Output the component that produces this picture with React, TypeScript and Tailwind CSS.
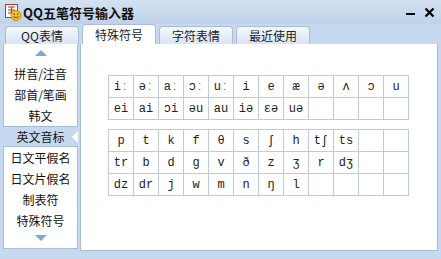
import React from "react";

const row1a = ["iː", "əː", "aː", "ɔː", "uː", "i", "e", "æ", "ə", "ʌ", "ɔ", "u"];
const row1b = ["ei", "ai", "ɔi", "əu", "au", "iə", "ɛə", "uə", "", "", "", ""];
const row2a = ["p", "t", "k", "f", "θ", "s", "ʃ", "h", "tʃ", "ts", "", ""];
const row2b = ["tr", "b", "d", "g", "v", "ð", "z", "ʒ", "r", "dʒ", "", ""];
const row2c = ["dz", "dr", "j", "w", "m", "n", "ŋ", "l", "", "", "", ""];

const cjk = { fontFamily: '"Noto Sans CJK SC", "Noto Sans", sans-serif' };
const mono = { fontFamily: '"Liberation Mono", "DejaVu Sans Mono", monospace' };

function Table({ rows }: { rows: string[][] }) {
  return (
    <div className="border-t border-l border-[#bccbdd] w-[301px]">
      {rows.map((r, i) => (
        <div key={i} className="flex">
          {r.map((c, j) => (
            <div
              key={j}
              className="w-[25px] h-[22px] border-r border-b border-[#bccbdd] flex items-center justify-center text-[12px] text-[#222]"
              style={mono}
            >
              {c}
            </div>
          ))}
        </div>
      ))}
    </div>
  );
}

const items = ["拼音/注音", "部首/笔画", "韩文", "英文音标", "日文平假名", "日文片假名", "制表符", "特殊符号"];

export default function App() {
  return (
    <div className="w-[441px] h-[259px] bg-[#c7d9ee] flex flex-col overflow-hidden" style={cjk}>
      {/* title bar */}
      <div className="h-[24px] flex items-center pl-[5px] pr-[5px] bg-gradient-to-b from-[#d3e1f1] to-[#bed2ea]">
        <svg width="17" height="17" viewBox="0 0 17 17" className="shrink-0">
          <rect x="0.5" y="0.5" width="12" height="13" fill="#fff" stroke="#b23a2a" />
          <path d="M3 3h7M6.5 3v6M3 6h7M3 9h7" stroke="#b23a2a" strokeWidth="1.2" />
          <circle cx="11" cy="11.5" r="5" fill="#f5c518" stroke="#b07a00" strokeWidth="0.8" />
          <circle cx="9.3" cy="10.3" r="0.8" fill="#5a3a00" />
          <circle cx="12.7" cy="10.3" r="0.8" fill="#5a3a00" />
          <path d="M8.5 12.5q2.5 2.5 5 0" stroke="#c0392b" strokeWidth="1.1" fill="none" />
        </svg>
        <div className="ml-[1px] text-[13px] font-bold text-[#111] leading-none">QQ五笔符号输入器</div>
        <div className="flex-1" />
        <div className="w-[9px] h-[2px] bg-black mr-[9px] mt-[4px]" />
        <svg width="11" height="11" viewBox="0 0 11 11" className="mr-[1px]">
          <path d="M1.5 1.5l8 8M9.5 1.5l-8 8" stroke="#000" strokeWidth="2.2" />
        </svg>
      </div>
      {/* tabs */}
      <div className="h-[20px] flex items-end pl-[5px] gap-[3px]">
        <div className="w-[74px] h-[18px] rounded-t-[4px] border border-b-0 border-[#a9bdd6] bg-gradient-to-b from-[#f4f8fc] to-[#d9e5f3] flex items-center justify-center text-[12px] text-[#222]">
          QQ表情
        </div>
        <div className="w-[74px] h-[20px] rounded-t-[4px] border border-b-0 border-[#a9bdd6] bg-white flex items-center justify-center text-[12px] text-[#222]">
          特殊符号
        </div>
        <div className="w-[74px] h-[18px] rounded-t-[4px] border border-b-0 border-[#a9bdd6] bg-gradient-to-b from-[#f4f8fc] to-[#d9e5f3] flex items-center justify-center text-[12px] text-[#222]">
          字符表情
        </div>
        <div className="w-[74px] h-[18px] rounded-t-[4px] border border-b-0 border-[#a9bdd6] bg-gradient-to-b from-[#f4f8fc] to-[#d9e5f3] flex items-center justify-center text-[12px] text-[#222]">
          最近使用
        </div>
      </div>
      {/* body */}
      <div className="flex flex-1 pl-[3px] pr-[3px] pb-[8px] gap-[2px]">
        <div className="w-[75px] mb-[2px] bg-white border border-t-0 border-[#a9bdd6] flex flex-col pt-[4px]">
          <div className="h-[10px] flex items-center justify-center">
            <div className="w-0 h-0 border-l-[6px] border-r-[6px] border-b-[6px] border-l-transparent border-r-transparent border-b-[#7ea7d4]" />
          </div>
          <div className="h-[5px]" />
          {items.map((t, i) => (
            <div
              key={i}
              className={
                "h-[21px] flex items-center justify-center text-[12px] text-[#111] relative " +
                (i === 3 ? "bg-[#c5d8ef] border-t border-b border-[#a3bcdb] -mx-px" : "")
              }
            >
              {t}
              {i === 3 && (
                <div className="absolute right-0 top-[4px] w-0 h-0 border-t-[6px] border-b-[6px] border-r-[6px] border-t-transparent border-b-transparent border-r-white" />
              )}
            </div>
          ))}
          <div className="h-[14px] flex items-center justify-center">
            <div className="w-0 h-0 border-l-[6px] border-r-[6px] border-t-[6px] border-l-transparent border-r-transparent border-t-[#7ea7d4]" />
          </div>
        </div>
        <div className="flex-1 bg-white border border-t-0 border-[#a9bdd6] pl-[27px] pt-[31px] flex flex-col gap-[9px]">
          <Table rows={[row1a, row1b]} />
          <Table rows={[row2a, row2b, row2c]} />
        </div>
      </div>
    </div>
  );
}
